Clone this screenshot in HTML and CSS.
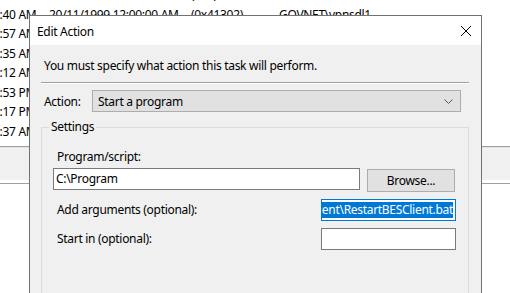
FILE: index.html
```html
<!DOCTYPE html>
<html>
<head>
<link rel="stylesheet" href="styles.css">
</head>
<body>
<div class="behind">
    <div class="rows">
        <div class="row"><span class="c1">1:04 PM</span><span class="c2">20/11/2024 1:04:00 PM</span><span class="c3">(0x0)</span><span class="c4">GOVNET\PAPSTD</span></div>
        <div class="row"><span class="c1">1:40 AM</span><span class="c2">20/11/1999 12:00:00 AM</span><span class="c3">(0x41302)</span><span class="c4">GOVNET\vpnsdl1</span></div>
        <div class="row"><span class="c1">3:57 AM</span></div>
        <div class="row"><span class="c1">9:35 AM</span></div>
        <div class="row"><span class="c1">8:12 AM</span></div>
        <div class="row"><span class="c1">4:53 PM</span></div>
        <div class="row"><span class="c1">1:17 PM</span></div>
        <div class="row"><span class="c1">2:37 AM</span></div>
        <div class="row"><span class="c1">1:04 PM</span></div>
    </div>
    <div class="band"></div>
</div>

<div class="dialog">
    <div class="titlebar">
        <span class="title">Edit Action</span>
        <svg class="close" width="12" height="12" viewBox="0 0 12 12">
            <path d="M1 1L11 11M11 1L1 11" stroke="#000" stroke-width="1" fill="none"/>
        </svg>
    </div>
    <div class="client">
        <p class="intro">You must specify what action this task will perform.</p>
        <div class="separator"></div>
        <div class="actionRow">
            <span class="label">Action:</span>
            <div class="combo">
                <span>Start a program</span>
                <svg width="9" height="5" viewBox="0 0 9 5">
                    <path d="M0.5 0.5L4.5 4.5L8.5 0.5" stroke="#555" stroke-width="1" fill="none"/>
                </svg>
            </div>
        </div>
        <fieldset class="group">
            <legend>Settings</legend>
            <div class="fieldLabel">Program/script:</div>
            <div class="programRow">
                <div class="textbox wide">C:\Program</div>
                <div class="button">Browse...</div>
            </div>
            <div class="optRow first">
                <span class="fieldLabel">Add arguments (optional):</span>
                <div class="textbox small focused"><span class="sel">ent\RestartBESClient.bat</span></div>
            </div>
            <div class="optRow">
                <span class="fieldLabel">Start in (optional):</span>
                <div class="textbox small"></div>
            </div>
        </fieldset>
    </div>
</div>
</body>
</html>
```
FILE: styles.css
```css
body{
    margin: 0;
    width: 510px;
    height: 293px;
    overflow: hidden;
    background: #fff;
    font-family: "Noto Sans", "Open Sans", sans-serif;
    font-size: 12px;
    letter-spacing: -0.3px;
    color: #000;
    position: relative;
}
.behind{
    width: 510px;
}
.rows{
    height: 161px;
    overflow: hidden;
    margin-top: -15px;
}
.row{
    height: 19.5px;
    line-height: 19.5px;
    white-space: nowrap;
    display: flex;
    margin-left: -7px;
}
.c1{
    width: 56px;
    flex-shrink: 0;
}
.c2{
    width: 142px;
    flex-shrink: 0;
}
.c3{
    width: 88px;
    flex-shrink: 0;
}
.band{
    height: 36px;
    border-top: 1px solid #a0a0a0;
    border-bottom: 1px solid #a0a0a0;
    background: #f0f0f0;
    box-shadow: inset 0 1px 0 #e3e3e3, inset 0 -3px 0 #fff;
}
.dialog{
    position: absolute;
    left: 29px;
    top: 15px;
    width: 451px;
    height: 300px;
    border: 1px solid #717171;
    border-bottom: none;
    background: #f0f0f0;
}
.titlebar{
    height: 29px;
    background: #fff;
    display: flex;
    align-items: center;
    justify-content: space-between;
    padding: 0 9px 0 7px;
}
.title{
    margin-top: 1px;
}
.close{
    display: block;
}
.client{
    padding: 13px 12px 0 11px;
}
.intro{
    margin: 0 0 0 3px;
    line-height: 16px;
}
.separator{
    height: 0;
    margin-top: 8px;
    border-top: 1px solid #a0a0a0;
    border-bottom: 1px solid #fff;
}
.actionRow{
    display: flex;
    align-items: center;
    margin-top: 6px;
    padding-left: 3px;
}
.label{
    width: 48px;
}
.combo{
    flex: 1;
    height: 20px;
    margin-right: 8px;
    border: 1px solid #adadad;
    background: #e1e1e1;
    display: flex;
    align-items: center;
    justify-content: space-between;
    padding: 0 7px 0 5px;
}
.combo svg{
    display: block;
}
.group{
    margin: 8px 0 0 0;
    padding: 15px 12px 0 11px;
    border: 1px solid #dcdcdc;
    height: 200px;
}
.group legend{
    padding: 0 2px;
    margin-left: -4px;
    line-height: 14px;
}
.fieldLabel{
    padding-left: 4px;
    line-height: 16px;
}
.programRow{
    display: flex;
    margin-top: 3px;
}
.textbox{
    height: 20px;
    line-height: 20px;
    border: 1px solid #7a7a7a;
    background: #fff;
    padding: 0 2px;
    overflow: hidden;
    white-space: nowrap;
}
.wide{
    width: 301px;
}
.button{
    width: 86px;
    height: 21px;
    margin-left: 7px;
    margin-top: 1px;
    border: 1px solid #adadad;
    background: #e1e1e1;
    text-align: center;
    line-height: 21px;
}
.optRow{
    display: flex;
    justify-content: space-between;
    align-items: center;
    margin-top: 7px;
    margin-right: 0;
}
.optRow.first{
    margin-top: 7px;
}
.small{
    width: 129px;
}
.focused{
    border-color: #0078d7;
    display: flex;
    justify-content: flex-end;
    align-items: center;
    padding-right: 2px;
}
.sel{
    flex-shrink: 0;
    background: #0078d7;
    color: #fff;
    line-height: 15px;
    padding: 0 0 1px 1px;
}
```
